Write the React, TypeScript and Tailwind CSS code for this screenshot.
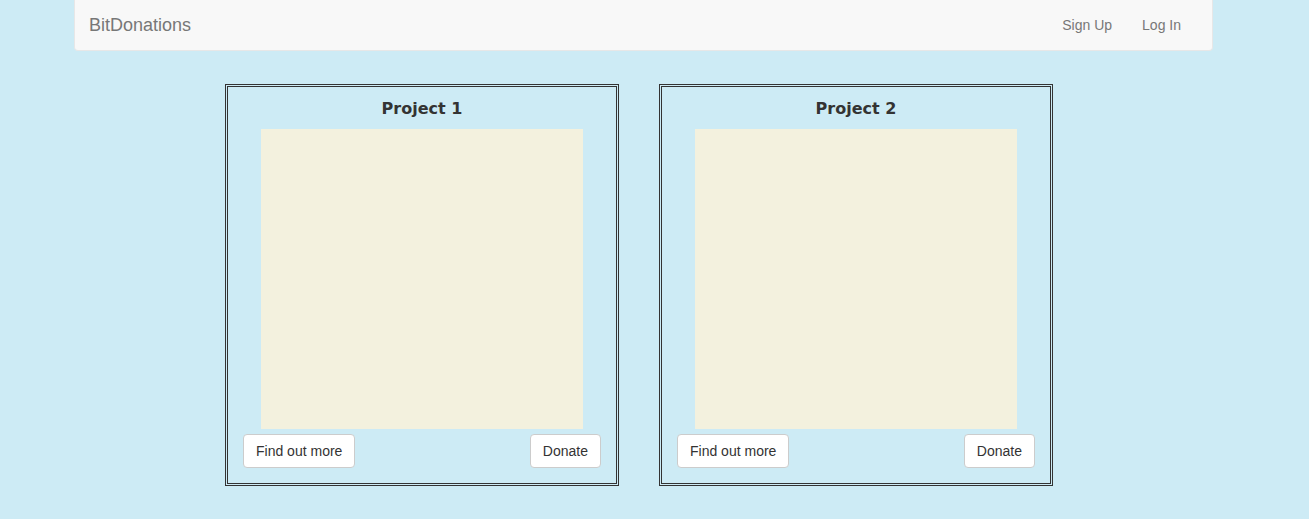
import React from "react";

function ProjectCard({ title }: { title: string }) {
  return (
    <div className="flex w-[394px] h-[402px] flex-col items-center border-[3px] border-double border-[#333] px-[15px] pt-[12px]">
      <h3 className="text-[16px] leading-[20px] font-bold text-[#333] font-['DejaVu_Sans',Verdana,sans-serif]">
        {title}
      </h3>
      <div className="mt-[10px] h-[300px] w-[322px] bg-[#f3f1de]" />
      <div className="mt-[5px] flex w-full items-center justify-between">
        <button className="h-[34px] rounded-[4px] border border-[#ccc] bg-white px-3 text-[14px] text-[#333]">
          Find out more
        </button>
        <button className="h-[34px] rounded-[4px] border border-[#ccc] bg-white px-3 text-[14px] text-[#333]">
          Donate
        </button>
      </div>
    </div>
  );
}

export default function App() {
  return (
    <div className="min-h-[519px] bg-[#cdebf5] font-['Liberation_Sans',Arial,sans-serif]">
      {/* Navbar */}
      <header className="ml-[74px] flex h-[51px] w-[1139px] items-center justify-between rounded-b-[4px] border border-t-0 border-[#e7e7e7] bg-[#f8f8f8] pl-[14px] pr-[16px]">
        <a href="#" className="text-[18px] text-[#777]">
          BitDonations
        </a>
        <nav className="flex items-center">
          <a href="#" className="px-[15px] text-[14px] text-[#777]">
            Sign Up
          </a>
          <a href="#" className="px-[15px] text-[14px] text-[#777]">
            Log In
          </a>
        </nav>
      </header>

      {/* Projects */}
      <div className="ml-[225px] mt-[33px] flex gap-[40px]">
        <ProjectCard title="Project 1" />
        <ProjectCard title="Project 2" />
      </div>
    </div>
  );
}
